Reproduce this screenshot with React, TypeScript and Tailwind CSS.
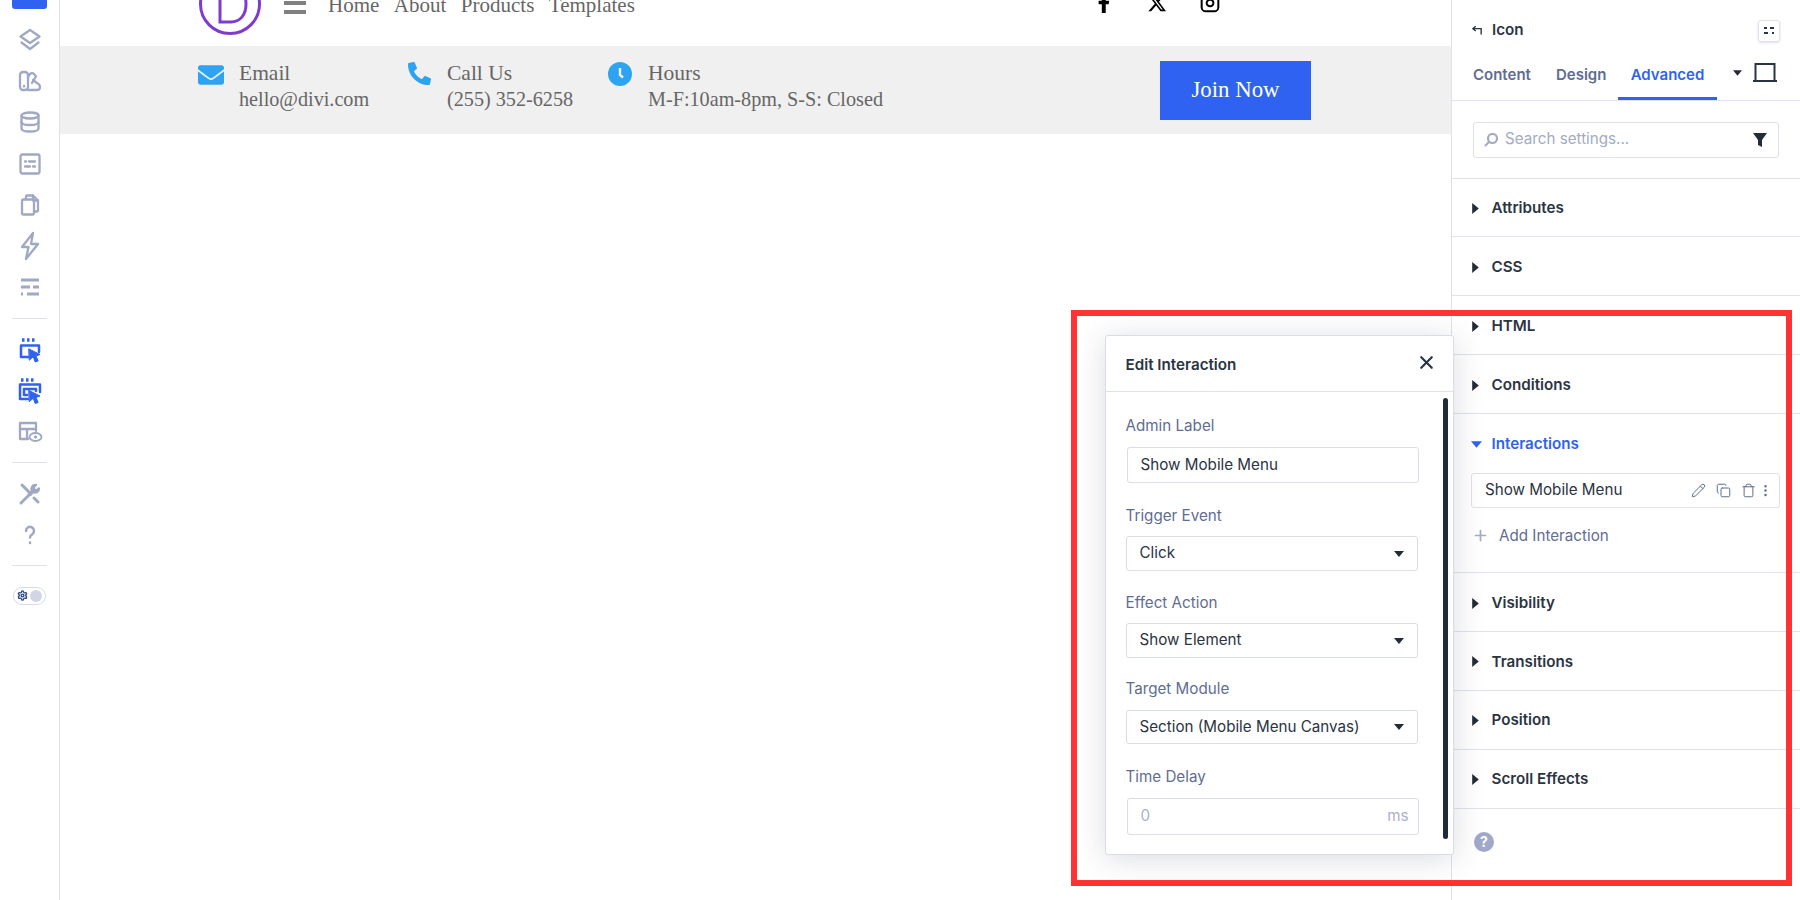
import type { ReactNode } from 'react';
import { Copy, Instagram, MoreVertical, Pencil, Plus, Settings, Trash, X } from 'lucide-react';
import { FaEnvelope, FaFacebookF, FaPhoneAlt } from 'react-icons/fa';
import { FaXTwitter } from 'react-icons/fa6';

const uiFont = '[font-family:Inter,"Noto_Sans",sans-serif]';

function RailIcon({ children, blue }: { children: ReactNode; blue?: boolean }) {
  return (
    <div className="flex h-[41.3px] items-center justify-center">
      <svg
        viewBox="0 0 24 24"
        fill="none"
        strokeWidth={blue ? 2.5 : 2.3}
        strokeLinecap="round"
        strokeLinejoin="round"
        className={blue ? 'h-6 w-6 overflow-visible stroke-[#2f62f0]' : 'h-6 w-6 overflow-visible stroke-[#a0a8c2]'}
      >
        {children}
      </svg>
    </div>
  );
}

function Rail() {
  return (
    <aside className="flex w-[60px] shrink-0 flex-col border-r border-[#dfe2ec] bg-white">
      <div className="mx-3 h-[9px] w-[35px] rounded-b-[3px] bg-[#2f62f0]" />
      <div className="mt-[10px]">
        <RailIcon>
          <path d="M12 2l9.500 6.500L12 15 2.500 8.500z" />
          <path d="M3.500 14.500L12 21l8.500-6.500" />
        </RailIcon>
        <RailIcon>
          <rect x="2" y="3" width="8" height="18" rx="3" />
          <path d="M10 8l2-3c1-1 3-1 4 0l1 1c1 1 1 2 0 3l-3 5" />
          <path d="M10 21h9c2 0 3-1 3-3s-1-3-3-4-3-3-4-3" />
          <path d="M6 17v.5" />
        </RailIcon>
        <RailIcon>
          <ellipse cx="12" cy="5.500" rx="8.500" ry="3" />
          <path d="M3.500 5.500v13c0 2 4 3 8.500 3s8.500-1 8.500-3v-13" />
          <path d="M3.500 12c0 2 4 3 8.500 3s8.500-1 8.500-3" />
        </RailIcon>
        <RailIcon>
          <rect x="2.500" y="2.500" width="19" height="19" rx="2" />
          <path d="M7 9.500h1M11 9.500h6M7 14.500h5M15 14.500h2" />
        </RailIcon>
        <RailIcon>
          <path d="M8 6V3.500c0-.6.4-1 1-1h6l5 5v10c0 .6-.4 1-1 1h-3" />
          <path d="M15 2.500v5h5" />
          <rect x="4" y="6.500" width="12" height="15" rx="1.500" />
        </RailIcon>
        <RailIcon>
          <path d="M15 -1L4 13h6.500L8 25l12-15h-7z" />
        </RailIcon>
        <RailIcon>
          <path d="M3 5h18M3 12h9M15 12h6M3 19h2M9 19h12" strokeWidth="3.200" strokeLinecap="butt" />
        </RailIcon>
      </div>
      <div className="mx-3 my-[10px] h-px bg-[#dfe2ec]" />
      <RailIcon blue>
        <path d="M4 2h2.500M9 2h2.500M14 2h2.500" strokeWidth="3.400" strokeLinecap="butt" />
        <path d="M11 19H3V7.500h18V14" />
        <path d="M11 11l11 5.500-4 1.500 2.200 5-3 1-2-5.200L11.500 22z" fill="#2f62f0" strokeWidth="1" />
      </RailIcon>
      <RailIcon blue>
        <path d="M3 1h2.500M8 1h2.500M13 1h2.500" strokeWidth="3.400" strokeLinecap="butt" />
        <path d="M10 20H2V5.500h20V13" />
        <path d="M9 16H6V10h12v2" />
        <path d="M11 11.500l11 5.500-4 1.500 2.200 5-3 1-2-5.200L11.500 22.500z" fill="#2f62f0" strokeWidth="1" />
      </RailIcon>
      <RailIcon>
        <path d="M10 19H2V3h16v8" />
        <path d="M2 9h16M9 9v10" />
        <ellipse cx="17.500" cy="17" rx="6" ry="4" strokeWidth="1.800" />
        <circle cx="17.500" cy="17" r="1.200" fill="#a0a8c2" strokeWidth="1" />
      </RailIcon>
      <div className="mx-3 my-[9.500px] h-px bg-[#dfe2ec]" />
      <RailIcon>
        <path d="M4 3l9 9M20 20l-4-4M3 21l8-8" strokeWidth="3" />
        <path d="M21 6.500a4 4 0 0 1-6 3.500L12 13l-1-1 3-3a4 4 0 0 1 4-6l-2.500 2.500 1 2 2 1z" fill="#a0a8c2" />
      </RailIcon>
      <RailIcon>
        <path d="M8 8a4 4 0 1 1 6.500 3c-1.500 1-2.500 2-2.500 3.500" strokeWidth="2.500" />
        <path d="M12 19.500v.5" strokeWidth="2.500" />
      </RailIcon>
      <div className="mx-3 my-[9px] h-px bg-[#dfe2ec]" />
      <div className="mt-[12px] flex h-[18px] w-[33px] items-center justify-between self-center rounded-full border border-[#d7dbe8] px-[3px]">
        <Settings className="h-[11px] w-[11px] text-[#2c4a8f]" strokeWidth={3} />
        <span className="h-[12px] w-[12px] rounded-full bg-[#d1d5e5]" />
      </div>
    </aside>
  );
}

function ContactItem({ icon, title, detail, className }: { icon: ReactNode; title: string; detail: string; className: string }) {
  return (
    <div className={`flex ${className}`}>
      {icon}
      <div className="text-[20.200px] leading-[26px] text-[#666666]">
        <div className="text-[21.500px]">{title}</div>
        <div>{detail}</div>
      </div>
    </div>
  );
}

function TopContent() {
  return (
    <div className='flex-1 [font-family:"Liberation_Serif",serif]'>
      <div className="h-[46px] overflow-hidden">
        <div className="-mt-[27px] flex items-start pl-[139px]">
          <svg viewBox="0 0 62 62" fill="none" className="h-[62px] w-[62px] shrink-0 stroke-[#7e3bd0]">
            <circle cx="31" cy="31" r="29.500" strokeWidth="3" />
            <path d="M21 13h11c9 0 15 7 15 18s-6 18-15 18H21z" strokeWidth="3" />
          </svg>
          <div className="ml-[23px] mt-[19px] flex w-[22px] flex-col gap-[5px]">
            <span className="h-[4px] bg-[#808080]" />
            <span className="h-[4px] bg-[#808080]" />
            <span className="h-[4px] bg-[#808080]" />
          </div>
          <nav className="ml-[22px] mt-[19px] flex gap-[14.500px] text-[21px] leading-[26px] text-[#666666]">
            <span>Home</span>
            <span>About</span>
            <span>Products</span>
            <span>Templates</span>
          </nav>
          <div className="ml-[459px] mt-[20px] flex items-center gap-[33px] text-black">
            <FaFacebookF className="h-[20px] w-[20px]" />
            <FaXTwitter className="h-[20px] w-[20px]" />
            <Instagram className="h-[20px] w-[20px]" strokeWidth={2.4} />
          </div>
        </div>
      </div>
      <div className="flex h-[88px] bg-[#f0f0f0] pl-[138px] pr-[140px] pt-[14px]">
        <ContactItem
          className="w-[210px] gap-[15px]"
          icon={<FaEnvelope className="mt-[2px] h-[26px] w-[26px] text-[#2ea3f2]" />}
          title="Email"
          detail="hello@divi.com"
        />
        <ContactItem
          className="w-[200px] gap-[16px]"
          icon={<FaPhoneAlt className="mt-[2px] h-[23px] w-[23px] text-[#2ea3f2]" />}
          title="Call Us"
          detail="(255) 352-6258"
        />
        <ContactItem
          className="flex-1 gap-[16px]"
          icon={
            <svg viewBox="0 0 24 24" className="mt-[2px] h-[24px] w-[24px] shrink-0">
              <circle cx="12" cy="12" r="12" fill="#2ea3f2" />
              <path d="M12 6v7l3 2.500" fill="none" stroke="#f0f0f0" strokeWidth="2.400" />
            </svg>
          }
          title="Hours"
          detail="M-F:10am-8pm, S-S: Closed"
        />
        <button type="button" className="mt-[1px] h-[59px] w-[151px] bg-[#2f62f0] text-[22.800px] text-white">
          Join Now
        </button>
      </div>
    </div>
  );
}

function Caret({ className }: { className: string }) {
  return (
    <svg viewBox="0 0 10 6" className={className}>
      <path d="M0 0h10L5 6z" fill="currentColor" />
    </svg>
  );
}

function Row({ title }: { title: string }) {
  return (
    <div className="flex h-[58.900px] items-center border-b border-[#dfe2ec] pl-[18px] pt-[2px]">
      <Caret className="h-[7px] w-[11px] -rotate-90 text-[#232b38]" />
      <span className="ml-[10.500px] text-[15.200px] font-semibold text-[#2b3442]">{title}</span>
    </div>
  );
}

function SettingsPanel() {
  return (
    <aside className="relative h-[900px] w-[349px] shrink-0 border-l border-[#dfe2ec] bg-white">
      <div className="h-[101px] border-b border-[#dfe2ec]">
        <div className="flex h-[62px] items-center justify-between pb-[1px] pl-5 pr-5">
          <div className="flex items-center gap-[9px]">
            <svg viewBox="0 0 12 10" fill="none" stroke="#2b3442" strokeWidth="1.500" className="h-[10px] w-[11px]">
              <path d="M4 1L1 3.500 4 6M1 3.500h9V10" />
            </svg>
            <span className="text-[15.200px] font-semibold text-[#2b3442]">Icon</span>
          </div>
          <div className="flex h-[22px] w-[22px] items-center justify-center rounded-[3px] border border-[#dfe2ec] shadow-sm">
            <svg viewBox="0 0 12 10" className="h-[10px] w-[12px]">
              <path d="M1 2h3M7 2h4M1 7h4M9 7h2" stroke="#2b3442" strokeWidth="1.800" />
            </svg>
          </div>
        </div>
        <div className="flex h-[38px] items-start">
          <span className="ml-[21px] mt-[1.500px] w-[57px] text-[15px] font-semibold text-[#5f6d92]">Content</span>
          <span className="ml-[26px] mt-[1.500px] w-[50px] text-[15px] font-semibold text-[#5f6d92]">Design</span>
          <span className="ml-[12px] h-[38px] w-[99px] border-b-[3.500px] border-[#2f62f0] pt-[1.500px] text-center text-[15px] font-semibold text-[#2f62f0]">
            Advanced
          </span>
          <Caret className="ml-[16px] mt-[8px] h-[6px] w-[9px] text-[#232b38]" />
          <svg viewBox="0 0 24 19" fill="none" stroke="#2b3442" strokeWidth="2" className="ml-[11px] mt-[1px] h-[19px] w-[24px]">
            <path d="M2.500 1h19v17h-19zM0 18h24" />
          </svg>
        </div>
      </div>
      <div className="h-[77.500px] border-b border-[#dfe2ec] px-[21px] pt-[20.500px]">
        <div className="flex h-[36px] w-[306px] items-center rounded-[3px] border border-[#dfe2ec] pl-[10px] pr-[11px]">
          <svg viewBox="0 0 14 14" fill="none" stroke="#a3abc2" strokeWidth="2.200" className="h-[14px] w-[14px]">
            <circle cx="8.500" cy="5.500" r="4.500" />
            <path d="M5 9l-4 4" />
          </svg>
          <span className="ml-[7px] flex-1 text-[15.200px] text-[#a3abc2]">Search settings...</span>
          <svg viewBox="0 0 14 14" className="h-[14px] w-[14px]">
            <path d="M0 0h14L9 7v7L5 12V7z" fill="#232b38" />
          </svg>
        </div>
      </div>
      <Row title="Attributes" />
      <Row title="CSS" />
      <Row title="HTML" />
      <Row title="Conditions" />
      <div className="h-[159px] border-b border-[#dfe2ec] pl-[18px]">
        <div className="flex h-[58.500px] items-center pt-[2px]">
          <Caret className="ml-[1px] h-[7px] w-[11px] text-[#2f62f0]" />
          <span className="ml-[9.500px] text-[15.200px] font-semibold text-[#2f62f0]">Interactions</span>
        </div>
        <div className="ml-[1px] flex h-[35px] w-[309px] items-center rounded-[3px] border border-[#dfe2ec] pl-[13px] pr-[6px]">
          <span className="flex-1 text-[15.200px] text-[#2b3442]">Show Mobile Menu</span>
          <Pencil className="h-[15px] w-[15px] text-[#5f6d92]" strokeWidth={1.6} />
          <Copy className="ml-[10px] h-[15px] w-[15px] text-[#5f6d92]" strokeWidth={1.6} />
          <Trash className="ml-[10px] h-[15px] w-[15px] text-[#5f6d92]" strokeWidth={1.6} />
          <MoreVertical className="ml-[2px] h-[15px] w-[15px] text-[#5f6d92]" strokeWidth={2} />
        </div>
        <div className="mt-[17px] flex items-center pl-[1.500px]">
          <Plus className="h-[17px] w-[17px] text-[#a3abc2]" strokeWidth={2.4} />
          <span className="ml-[10.500px] text-[15.200px] text-[#5f6d92]">Add Interaction</span>
        </div>
      </div>
      <Row title="Visibility" />
      <Row title="Transitions" />
      <Row title="Position" />
      <Row title="Scroll Effects" />
      <div className="ml-[22px] mt-[23px] flex h-[20px] w-[20px] items-center justify-center rounded-full bg-[#a0a9c9] text-[14px] font-bold text-white">
        ?
      </div>
    </aside>
  );
}

function FieldLabel({ children, className }: { children: ReactNode; className: string }) {
  return <div className={`h-5 text-[15.200px] leading-5 text-[#5f6d92] ${className}`}>{children}</div>;
}

function SelectBox({ value, className }: { value: string; className: string }) {
  return (
    <div className={`flex w-[292px] items-center justify-between rounded-[3px] border border-[#d9dde9] pl-[13px] pr-[13px] text-[15.200px] text-[#2b3442] ${className}`}>
      <span>{value}</span>
      <Caret className="h-[6px] w-[10px] text-[#232b38]" />
    </div>
  );
}

function EditModal() {
  return (
    <div className="absolute left-[1104.500px] top-[335px] h-[520px] w-[349px] rounded-[3px] border border-[#d9dde9] bg-white shadow-[0_4px_30px_rgba(40,50,80,0.17)]">
      <div className="flex h-[56px] items-center justify-between border-b border-[#dfe2ec] pl-5 pr-[16px] pt-[3px]">
        <span className="text-[15.200px] font-semibold text-[#2b3442]">Edit Interaction</span>
        <X className="mb-[6px] h-[21px] w-[21px] text-[#2b3442]" strokeWidth={2.5} />
      </div>
      <div className="px-5 pt-6">
        <FieldLabel className="">Admin Label</FieldLabel>
        <div className="ml-[1px] mt-[11px] flex h-[36px] w-[292px] items-center rounded-[3px] border border-[#d9dde9] pl-[13px] pt-[1px] text-[15.200px] text-[#2b3442]">
          Show Mobile Menu
        </div>
        <FieldLabel className="mt-[23px]">Trigger Event</FieldLabel>
        <SelectBox value="Click" className="mt-[10px] h-[35px]" />
        <FieldLabel className="mt-[22px]">Effect Action</FieldLabel>
        <SelectBox value="Show Element" className="mt-[10px] h-[35px]" />
        <FieldLabel className="mt-[21px]">Target Module</FieldLabel>
        <SelectBox value="Section (Mobile Menu Canvas)" className="mt-[11px] h-[34px]" />
        <FieldLabel className="mt-[23px]">Time Delay</FieldLabel>
        <div className="ml-[1px] mt-[11px] flex h-[37px] w-[292px] items-center justify-between rounded-[3px] border border-[#d9dde9] pl-[13px] pr-[9px] text-[15.200px] text-[#a9b2c8]">
          <span>0</span>
          <span>ms</span>
        </div>
      </div>
      <div className="absolute left-[337.500px] top-[62px] h-[441px] w-[5px] rounded-full bg-[#1f2a3a]" />
    </div>
  );
}

export default function App() {
  return (
    <div className={`relative flex h-[900px] w-[1800px] overflow-hidden bg-white ${uiFont}`}>
      <Rail />
      <TopContent />
      <SettingsPanel />
      <EditModal />
      <div className="pointer-events-none absolute left-[1071px] top-[310px] h-[576px] w-[721px] border-[6.500px] border-[#ff3333]" />
    </div>
  );
}
